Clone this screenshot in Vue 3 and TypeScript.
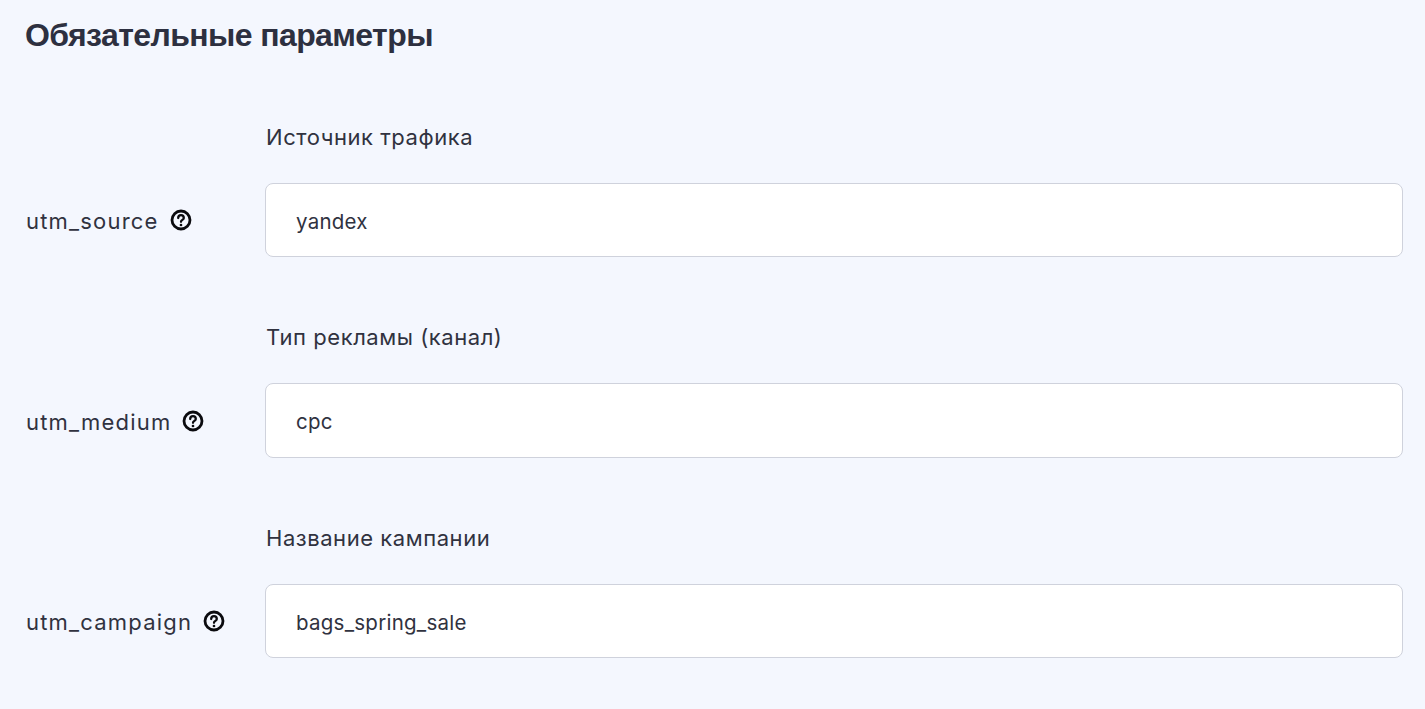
<script setup lang="ts">
interface Param {
  name: string
  label: string
  value: string
}

const params: Param[] = [
  { name: 'utm_source', label: 'Источник трафика', value: 'yandex' },
  { name: 'utm_medium', label: 'Тип рекламы (канал)', value: 'cpc' },
  { name: 'utm_campaign', label: 'Название кампании', value: 'bags_spring_sale' },
]
</script>

<template>
  <main class="page">
    <h2 class="title">Обязательные параметры</h2>
    <div class="rows">
      <div v-for="p in params" :key="p.name" class="row">
        <div class="name">
          <span class="name-text">{{ p.name }}</span>
          <svg class="help" viewBox="0 0 24 24" width="24" height="24" fill="none">
            <circle cx="12" cy="12" r="9" stroke="#0b0b0f" stroke-width="2.8" />
            <path d="M9.2 10a2.8 2.8 0 0 1 5.6 0c0 1.9-2.8 1.9-2.8 3.8" stroke="#0b0b0f" stroke-width="2.3" stroke-linecap="round" />
            <circle cx="12" cy="17" r="1.35" fill="#0b0b0f" />
          </svg>
        </div>
        <div class="field">
          <label class="label">{{ p.label }}</label>
          <div class="input">{{ p.value }}</div>
        </div>
      </div>
    </div>
  </main>
</template>

<style scoped>
.page {
  box-sizing: border-box;
  height: 709px;
  padding: 17px 22px 0 26px;
  background: #f4f7fe;
  color: #30323f;
  font-family: Inter, "Open Sans", sans-serif;
  overflow: hidden;
}

.title {
  margin: 0 0 71.8px -1px;
  font-family: "Liberation Sans", Arial, sans-serif;
  font-size: 32px;
  line-height: 36px;
  font-weight: 700;
  letter-spacing: -0.6px;
  color: #2d3040;
}

.rows {
  display: flex;
  flex-direction: column;
  gap: 68px;
}

.row {
  display: grid;
  grid-template-columns: 239px 1fr;
  align-items: end;
}

.name {
  display: flex;
  align-items: center;
  gap: 10px;
  height: 74.5px;
  font-size: 22px;
  letter-spacing: 1.2px;
}

.name-text {
  padding-top: 2px;
}

.help {
  flex: none;
}

.field {
  display: flex;
  flex-direction: column;
  gap: 34px;
}

.label {
  font-size: 22px;
  line-height: 24px;
  letter-spacing: 0.55px;
  margin: 0 0 0 1px;
}

.input {
  box-sizing: border-box;
  height: 74.5px;
  padding: 2px 30px 0;
  display: flex;
  align-items: center;
  background: #fff;
  border: 1px solid #cfd2dc;
  border-radius: 8px;
  font-size: 20.5px;
  letter-spacing: 0.25px;
}
</style>
